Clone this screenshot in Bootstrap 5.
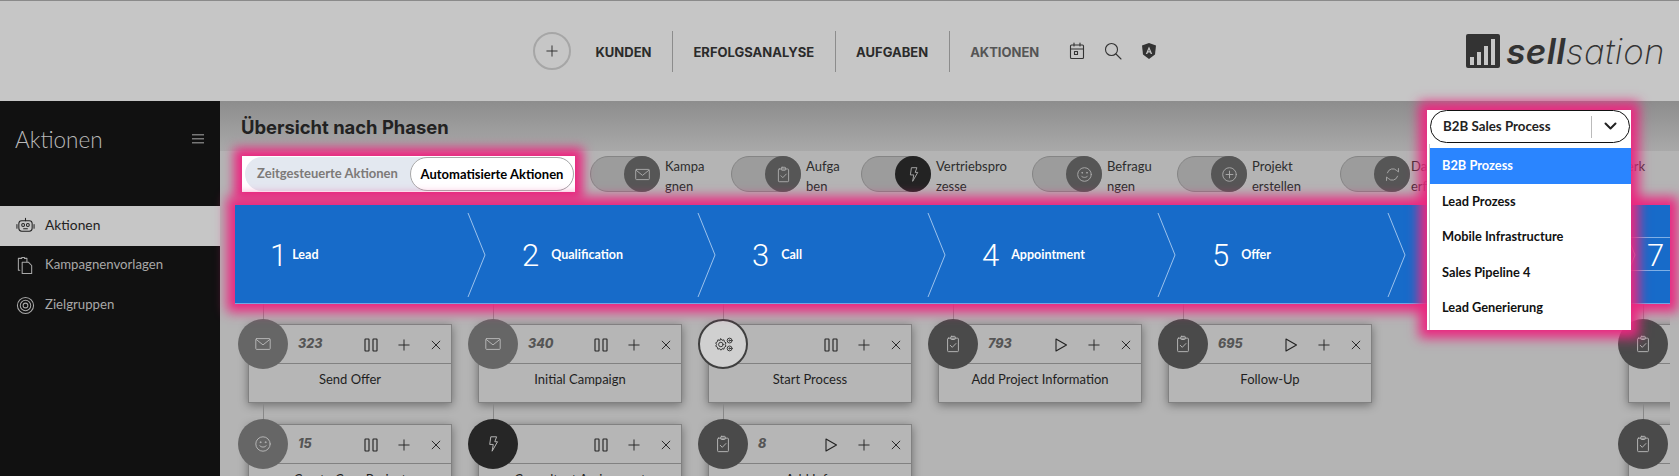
<!DOCTYPE html>
<html lang="de">

<head>
    <meta charset="UTF-8">
    <meta name="viewport" content="width=device-width, initial-scale=1.0">
    <title>Aktionen</title>
    <link href="https://cdn.jsdelivr.net/npm/bootstrap@5.3.0/dist/css/bootstrap.min.css" rel="stylesheet">
    <style>
        html, body { height: 476px; overflow: hidden; }
        body { font-family: "Lato", "Liberation Sans", sans-serif; background: #b4b4b4; color: #222; }
        svg.ico { fill: none; stroke: currentColor; stroke-width: 1.1; stroke-linecap: round; stroke-linejoin: round; }

        /* top bar */
        .top-bar { height: 101px; background: #c6c6c6; border-top: 1px solid #8a8a8a; padding: 0; flex-wrap: nowrap; }
        .top-inner { margin-left: 533px; }
        .add-btn { width: 38px; height: 38px; border-radius: 50%; border: 2px solid #a6a6a6; color: #2b2b2b; margin-right: 4px; }
        .top-bar .nav-link { font-family: "Inter", sans-serif; font-weight: 700; font-size: 13px; color: #2b2b2b; padding: 12px 20.5px; }
        .top-bar .nav-item { border-right: 1px solid #8c8c8c; height: 41px; }
        .top-bar .nav-item:last-child { border-right: 0; }
        .top-bar .nav-link.current { color: #555; }
        .top-ico { color: #333; gap: 19px; margin-left: 9px; }
        .brand { margin-right: 14px; gap: 6px; color: #333; }
        .brand-name { font-family: "Inter", sans-serif; font-size: 35px; font-style: italic; line-height: 1; font-weight: 200; letter-spacing: .4px; }
        .brand-name b { font-weight: 600; }

        /* side */
        .side { width: 220px; height: 375px; background: #111; flex: none; }
        .side-title { height: 105px; padding: 25px 15px 0; color: #b9b9b9; font-size: 22.5px; font-weight: 300; line-height: 28px; }
        .side-burger { color: #777; margin: 8px 0 0; }
        .side .nav-link { height: 40px; padding: 0 0 2px 16px; color: #a8a8a8; font-size: 13.2px; gap: 10px; }
        .side .nav-link.active { background: #c6c6c6; color: #222; font-size: 13.8px; }

        /* main */
        .main-area { width: 1459px; min-width: 0; position: relative; }
        .head-strip { height: 50px; padding: 2px 0 0 21px; background: linear-gradient(#8d8d8d, #a9a9a9); }
        .head-strip h1 { font-family: "Inter", sans-serif; font-size: 18.4px; font-weight: 700; margin: 0; color: #222; }
        .filter-line { display: grid; grid-template-columns: 348px 141px 130px 171px 145px 163px 163px 142px; height: 54px; padding: 5px 0 0 22px; white-space: nowrap; }
        .mode-switch { width: 333px; height: 36px; background: #fff; padding: 1px 1px 1px 3px; box-shadow: 0 0 10px 8px #ea2880; position: relative; z-index: 1; }
        .mode-track { background: #e3e8f0; border-radius: 17px; width: 100%; font-size: 13px; font-weight: 700; color: #7d7a78; }
        .mode-track span { flex: 1; text-align: center; }
        .mode-track .on { flex: none; width: 164px; height: 34px; line-height: 32px; background: #fff; border: 1px solid #a8a8a8; border-radius: 17px; color: #000; }
        .flt { gap: 5px; font-size: 13px; line-height: 20px; color: #2d2d2d; }
        .flt-tight { gap: 1px; }
        .flt-pill { width: 70px; height: 36px; flex: none; border-radius: 18px; background: #9c9c9c; border: 1px solid #858585; position: relative; }
        .flt-knob { position: absolute; right: -1px; top: -1px; width: 36px; height: 36px; border-radius: 50%; background: #565656; color: #aaa; }
        .flt-knob.dark { background: #232323; }

        /* stepper */
        .step-bar { width: 1435px; height: 99px; margin-left: 15px; background: #176bc9; border-bottom: 1px solid #6fa8e4; box-shadow: 0 0 11px 8px #ea2880; position: relative; z-index: 2; overflow: hidden; }
        .step { width: 230px; flex: none; padding: 2px 0 0 57px; color: #fff; position: relative; gap: 12px; }
        .step-first { padding-left: 35px; gap: 5px; }
        .step-num { font-family: "Roboto", sans-serif; font-weight: 300; font-size: 31px; line-height: 1; }
        .step-label { font-size: 12.5px; font-weight: 700; }
        .step-arrow { position: absolute; left: 232px; top: 8px; color: #9cc2ec; }
        .step-last { padding-left: 32px; }
        .step-last::before { content: ""; position: absolute; left: 0; right: 0; top: 32px; height: 34px; border-top: 1px solid #7fb0e6; border-bottom: 1px solid #7fb0e6; }

        /* cards */
        .phase-clip { width: 1435px; margin-left: 15px; height: 172px; overflow: hidden; }
        .phase-grid { display: grid; grid-template-columns: repeat(7, 204px); column-gap: 26px; row-gap: 21px; padding: 20px 0 0 13px; }
        .task { height: 79px; background: #b6b6b6; border: 1px solid #818181; border-radius: 0; box-shadow: 0 2px 9px rgba(0, 0, 0, .4); position: relative; }
        .task::before { content: ""; position: absolute; left: 14px; top: -22px; width: 1px; height: 21px; background: #888; }
        .task-top { height: 39px; padding: 1px 9px 0 49px; background: transparent; border-bottom: 1px solid #818181; border-radius: 0 !important; }
        .task-count { font-family: "Inter", sans-serif; font-weight: 800; font-style: italic; font-size: 12.5px; color: #555; flex: 1; }
        .task-acts { gap: 20px; color: #222; }
        .task-name { font-size: 13px; padding: 5px 0 0; text-align: center; color: #1f1f1f; line-height: 20px; }
        .task-dot { position: absolute; left: -11px; top: -6px; width: 50px; height: 50px; border-radius: 50%; color: #b4b4b4; }
        .dot-mid { background: #666; }
        .dot-deep { background: #4a4a4a; }
        .dot-black { background: #262626; }
        .dot-open { background: #d0d0d0; border: 2px solid #3f3f3f; color: #333; }

        /* process select */
        .proc-box { position: absolute; left: 1207px; top: 9px; width: 204px; z-index: 5; background: #fff; box-shadow: 0 0 11px 8px #ea2880; }
        .proc-select { height: 33px; margin: 0 1px 0 3px; border: 1px solid #111; border-radius: 17px; font-size: 13.3px; font-weight: 700; padding-left: 12px; background: #fff; color: #222; }
        .proc-chev { width: 38px; height: 22px; margin-left: auto; border-left: 1px solid #bbb; color: #222; }
        .proc-box .dropdown-menu { position: static; display: block; width: 201px; min-width: 0; margin: 1px 0 0 3px; padding: 4px 0; border: 0; border-radius: 0; box-shadow: -1px 0 0 #ccc; }
        .proc-box .dropdown-item { height: 35.5px; line-height: 34.5px; padding: 0 0 0 12px; font-size: 12.8px; font-weight: 700; color: #111; }
        .proc-box .dropdown-item.active { background: #2a85ff; color: #fff; }
    </style>
</head>

<body>

    <svg width="0" height="0" class="position-absolute">
        <symbol id="i-mail" viewBox="0 0 20 20"><rect x="2" y="4" width="16" height="12" rx="1"/><path d="M2.500 5l7.500 6 7.500-6"/></symbol>
        <symbol id="i-clip" viewBox="0 0 20 20"><rect x="4" y="3.500" width="12" height="15" rx="1"/><rect x="7.500" y="1.500" width="5" height="3.500" rx=".8"/><path d="M7 11.500l2.200 2.200 4-4.200"/></symbol>
        <symbol id="i-bolt" viewBox="0 0 20 20"><path d="M8 2h6l-2 5.500h3L9 18l1.300-7.500H6.800z"/></symbol>
        <symbol id="i-smile" viewBox="0 0 20 20"><circle cx="10" cy="10" r="8"/><circle cx="7.200" cy="8" r=".5"/><circle cx="12.800" cy="8" r=".5"/><path d="M6.500 12c1 2 6 2 7 0"/></symbol>
        <symbol id="i-plusc" viewBox="0 0 20 20"><circle cx="10" cy="10" r="8"/><path d="M10 6v8M6 10h8"/></symbol>
        <symbol id="i-sync" viewBox="0 0 20 20"><path d="M4 8a6.500 6.500 0 0 1 11-2.600L17 7V3M16 12a6.500 6.500 0 0 1-11 2.600L3 13v4"/></symbol>
        <symbol id="i-gears" viewBox="0 0 24 20"><circle cx="9" cy="10" r="2.600"/><path d="M9 3.500l1.300 1.700 2.200-.5.5 2.200 1.900 1.200-1 1.900 1 1.900-1.900 1.200-.5 2.200-2.200-.5L9 16.500l-1.300-1.700-2.200.5-.5-2.200-1.900-1.200 1-1.900-1-1.900 1.900-1.200.5-2.200 2.200.5z"/><circle cx="19" cy="5.500" r="2.800"/><circle cx="19" cy="14.500" r="2.800"/><circle cx="19" cy="5.500" r=".8"/><circle cx="19" cy="14.500" r=".8"/></symbol>
        <symbol id="i-pause" viewBox="0 0 14 14"><rect x="1" y="1" width="4" height="12" rx=".5"/><rect x="9" y="1" width="4" height="12" rx=".5"/></symbol>
        <symbol id="i-play" viewBox="0 0 14 14"><path d="M2 1l10.500 6L2 13z"/></symbol>
        <symbol id="i-plus" viewBox="0 0 14 14"><path d="M7 1v12M1 7h12"/></symbol>
        <symbol id="i-x" viewBox="0 0 14 14"><path d="M2.500 2.500l9 9M11.500 2.500l-9 9"/></symbol>
    </svg>

    <!-- Kopfzeile -->
    <nav class="navbar top-bar">
        <div class="d-flex align-items-center top-inner">
            <button class="add-btn btn p-0 d-flex align-items-center justify-content-center">
                <svg class="ico" width="12" height="12"><use href="#i-plus"/></svg>
            </button>
            <ul class="nav align-items-center">
                <li class="nav-item"><a class="nav-link" href="#">KUNDEN</a></li>
                <li class="nav-item"><a class="nav-link" href="#">ERFOLGSANALYSE</a></li>
                <li class="nav-item"><a class="nav-link" href="#">AUFGABEN</a></li>
                <li class="nav-item"><a class="nav-link current" href="#">AKTIONEN</a></li>
            </ul>
            <div class="d-flex align-items-center top-ico">
                <svg class="ico" width="16" height="18" viewBox="0 0 16 18"><rect x="1.500" y="3" width="13" height="13.500" rx="1"/><path d="M1.500 7h13M5 1v3M11 1v3"/><rect x="5.500" y="9.500" width="3" height="3"/></svg>
                <svg class="ico" width="18" height="18" viewBox="0 0 18 18"><circle cx="7.500" cy="7.500" r="6"/><path d="M12 12l5 5"/></svg>
                <svg width="16" height="18" viewBox="0 0 16 18"><path d="M8 1l7 2.500-1 9L8 17l-6-4.500-1-9z" fill="#333"/><path d="M8 4.500L4.800 12h1.500l.6-1.600h2.200l.6 1.600h1.500zM7.300 9.200L8 7.400l.7 1.800z" fill="#c6c6c6"/></svg>
            </div>
        </div>
        <div class="brand d-flex align-items-center ms-auto">
            <svg width="34" height="34" viewBox="0 0 34 34"><rect width="34" height="34" rx="2" fill="#333"/><path d="M4 31h4v-8H4zM11 31h4V18h-4zM18 31h4V12h-4zM25 31h4V5h-4z" fill="#c6c6c6"/></svg>
            <span class="brand-name"><b>sell</b>sation</span>
        </div>
    </nav>

    <div class="d-flex">
        <!-- Seitenleiste -->
        <aside class="side">
            <div class="side-title d-flex justify-content-between pe-3">
                <span>Aktionen</span>
                <svg class="side-burger" width="12" height="10" viewBox="0 0 12 10" fill="currentColor"><path d="M0 0h12v1.500H0zM0 4h12v1.500H0zM0 8h12v1.500H0z"/></svg>
            </div>
            <nav class="nav flex-column">
                <a class="nav-link active d-flex align-items-center" href="#">
                    <svg class="ico" width="19" height="19" viewBox="0 0 20 20"><rect x="3" y="5" width="14" height="11" rx="3"/><circle cx="7.500" cy="9.500" r="1.500"/><circle cx="12.500" cy="9.500" r="1.500"/><path d="M8 13.500h4M10 5V2.500M1 9v4M19 9v4"/></svg>
                    Aktionen
                </a>
                <a class="nav-link d-flex align-items-center" href="#">
                    <svg class="ico" width="19" height="19" viewBox="0 0 20 20"><path d="M4 15H2.500V2.500H6V1.500h3v1h2.500V6"/><path d="M6.500 6.500H13l3.500 3.500v8.500h-10z"/></svg>
                    Kampagnenvorlagen
                </a>
                <a class="nav-link d-flex align-items-center" href="#">
                    <svg class="ico" width="19" height="19" viewBox="0 0 20 20"><circle cx="10" cy="10" r="8.500"/><circle cx="10" cy="10" r="5.500"/><circle cx="10" cy="10" r="2.500"/></svg>
                    Zielgruppen
                </a>
            </nav>
        </aside>

        <main class="main-area">
            <div class="head-strip d-flex align-items-center">
                <h1>Übersicht nach Phasen</h1>
            </div>

            <!-- Auswahl oben rechts -->
            <div class="proc-box">
                <div class="proc-select d-flex align-items-center">
                    B2B Sales Process
                    <span class="proc-chev d-flex align-items-center justify-content-center">
                        <svg width="13" height="9" viewBox="0 0 13 9" fill="none" stroke="currentColor" stroke-width="2" stroke-linecap="round" stroke-linejoin="round"><path d="M1.500 1.500l5 5 5-5"/></svg>
                    </span>
                </div>
                <ul class="dropdown-menu list-unstyled mb-0">
                    <li><a class="dropdown-item active" href="#">B2B Prozess</a></li>
                    <li><a class="dropdown-item" href="#">Lead Prozess</a></li>
                    <li><a class="dropdown-item" href="#">Mobile Infrastructure</a></li>
                    <li><a class="dropdown-item" href="#">Sales Pipeline 4</a></li>
                    <li><a class="dropdown-item" href="#">Lead Generierung</a></li>
                </ul>
            </div>

            <div class="filter-line">
                <div class="mode-switch d-flex">
                    <div class="mode-track d-flex align-items-center">
                        <span>Zeitgesteuerte Aktionen</span>
                        <span class="on">Automatisierte Aktionen</span>
                    </div>
                </div>
                <div class="flt d-flex"><div class="flt-pill"><div class="flt-knob d-flex align-items-center justify-content-center"><svg class="ico" width="17" height="17"><use href="#i-mail"/></svg></div></div><div class="flt-text">Kampa<br>gnen</div></div>
                <div class="flt d-flex"><div class="flt-pill"><div class="flt-knob d-flex align-items-center justify-content-center"><svg class="ico" width="17" height="17"><use href="#i-clip"/></svg></div></div><div class="flt-text">Aufga<br>ben</div></div>
                <div class="flt d-flex"><div class="flt-pill"><div class="flt-knob dark d-flex align-items-center justify-content-center"><svg class="ico" width="17" height="17"><use href="#i-bolt"/></svg></div></div><div class="flt-text">Vertriebspro<br>zesse</div></div>
                <div class="flt d-flex"><div class="flt-pill"><div class="flt-knob d-flex align-items-center justify-content-center"><svg class="ico" width="17" height="17"><use href="#i-smile"/></svg></div></div><div class="flt-text">Befragu<br>ngen</div></div>
                <div class="flt d-flex"><div class="flt-pill"><div class="flt-knob d-flex align-items-center justify-content-center"><svg class="ico" width="17" height="17"><use href="#i-plusc"/></svg></div></div><div class="flt-text">Projekt<br>erstellen</div></div>
                <div class="flt flt-tight d-flex"><div class="flt-pill"><div class="flt-knob d-flex align-items-center justify-content-center"><svg class="ico" width="17" height="17"><use href="#i-sync"/></svg></div></div><div class="flt-text">Daten<br>erfassen</div></div>
                <div class="flt d-flex justify-content-end"><div class="flt-text">Netzwerk</div></div>
            </div>

            <div class="step-bar d-flex">
                <div class="step step-first d-flex align-items-center"><span class="step-num">1</span><span class="step-label">Lead</span><svg class="step-arrow" width="20" height="84" viewBox="0 0 20 84" fill="none" stroke="currentColor"><path d="M1 0l17 42L1 84"/></svg></div>
                <div class="step d-flex align-items-center"><span class="step-num">2</span><span class="step-label">Qualification</span><svg class="step-arrow" width="20" height="84" viewBox="0 0 20 84" fill="none" stroke="currentColor"><path d="M1 0l17 42L1 84"/></svg></div>
                <div class="step d-flex align-items-center"><span class="step-num">3</span><span class="step-label">Call</span><svg class="step-arrow" width="20" height="84" viewBox="0 0 20 84" fill="none" stroke="currentColor"><path d="M1 0l17 42L1 84"/></svg></div>
                <div class="step d-flex align-items-center"><span class="step-num">4</span><span class="step-label">Appointment</span><svg class="step-arrow" width="20" height="84" viewBox="0 0 20 84" fill="none" stroke="currentColor"><path d="M1 0l17 42L1 84"/></svg></div>
                <div class="step d-flex align-items-center"><span class="step-num">5</span><span class="step-label">Offer</span><svg class="step-arrow" width="20" height="84" viewBox="0 0 20 84" fill="none" stroke="currentColor"><path d="M1 0l17 42L1 84"/></svg></div>
                <div class="step d-flex align-items-center"><svg class="step-arrow" width="20" height="84" viewBox="0 0 20 84" fill="none" stroke="currentColor"><path d="M1 0l17 42L1 84"/></svg></div>
                <div class="step step-last d-flex align-items-center"><span class="step-num">7</span></div>
            </div>

            <div class="phase-clip">
                <div class="phase-grid" id="phases"></div>
            </div>
        </main>
    </div>

    <script src="https://cdn.jsdelivr.net/npm/bootstrap@5.3.0/dist/js/bootstrap.bundle.min.js"></script>
    <script>
        // null = leere Spalte
        const tasks = [
            { dot: "mid", icon: "mail", count: "323", run: true, name: "Send Offer" },
            { dot: "mid", icon: "mail", count: "340", run: true, name: "Initial Campaign" },
            { dot: "open", icon: "gears", count: "", run: true, name: "Start Process" },
            { dot: "deep", icon: "clip", count: "793", run: false, name: "Add Project Information" },
            { dot: "deep", icon: "clip", count: "695", run: false, name: "Follow-Up" },
            null,
            { dot: "deep", icon: "clip", count: "", run: false, name: "" },
            { dot: "mid", icon: "smile", count: "15", run: true, name: "Create Case Project" },
            { dot: "black", icon: "bolt", count: "", run: true, name: "Consultant Assignment" },
            { dot: "deep", icon: "clip", count: "8", run: false, name: "Add Info" },
            null,
            null,
            null,
            { dot: "deep", icon: "clip", count: "", run: false, name: "" }
        ];

        document.getElementById("phases").innerHTML = tasks.map(t => {
            if (!t) return "<div></div>";
            return `<div class="card task">
                <div class="task-dot dot-${t.dot} d-flex align-items-center justify-content-center"><svg class="ico" width="${t.icon === "gears" ? 21 : 18}" height="${t.icon === "gears" ? 21 : 18}"><use href="#i-${t.icon}"/></svg></div>
                <div class="card-header task-top d-flex align-items-center">
                    <span class="task-count">${t.count}</span>
                    <span class="task-acts d-flex align-items-center">
                        <svg class="ico" width="14" height="14"><use href="#i-${t.run ? "pause" : "play"}"/></svg>
                        <svg class="ico" width="12" height="12"><use href="#i-plus"/></svg>
                        <svg class="ico" width="12" height="12"><use href="#i-x"/></svg>
                    </span>
                </div>
                <div class="card-body task-name">${t.name}</div>
            </div>`;
        }).join("");
    </script>

</body>

</html>
